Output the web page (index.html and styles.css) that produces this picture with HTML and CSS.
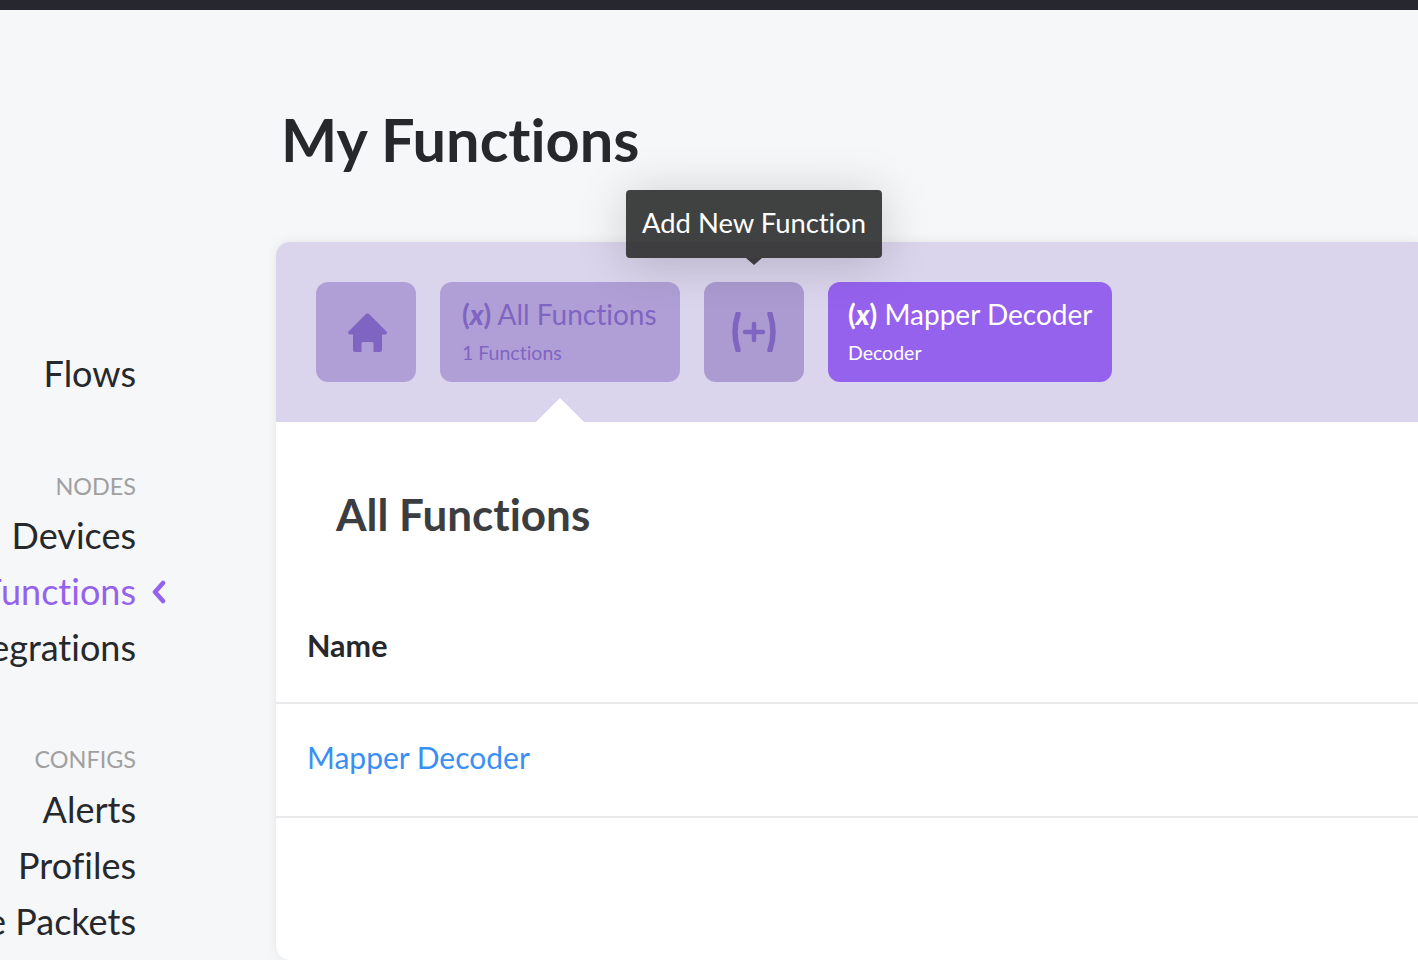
FILE: index.html
```html
<!DOCTYPE html>
<html lang="en">

<head>
  <meta charset="UTF-8">
  <title>My Functions</title>

  <link rel="stylesheet" href="styles.css">
</head>

<body>
  <div class="topbar"></div>

  <div class="layout">
    <nav class="sidebar">
      <a class="nav-item nav-flows">Flows</a>

      <div class="nav-label nav-label-nodes">NODES</div>
      <a class="nav-item">Devices</a>
      <a class="nav-item nav-active">Functions
        <svg class="nav-chevron" width="14" height="24" viewBox="0 0 14 24">
          <path d="M11 3 L3 12 L11 21" fill="none" stroke="#9562ee" stroke-width="4.500" stroke-linecap="round" stroke-linejoin="round" />
        </svg>
      </a>
      <a class="nav-item">Integrations</a>

      <div class="nav-label nav-label-configs">CONFIGS</div>
      <a class="nav-item">Alerts</a>
      <a class="nav-item">Profiles</a>
      <a class="nav-item">Free Packets</a>
    </nav>

    <main class="content">
      <h1 class="page-title">My Functions</h1>

      <section class="panel">
        <div class="panel-head">
          <div class="tab tab-icon">
            <svg class="home-icon" width="40" height="40" viewBox="0 0 40 40">
              <path d="M18 1 Q19.500 0 21 1 L38.500 18.500 Q39.800 21.500 37 21.500 L34 21.500 L34 37 Q34 39 32 39 L25.500 39 L25.500 30.500 Q25.500 29 24 29 L15 29 Q13.500 29 13.500 30.500 L13.500 39 L7 39 Q5 39 5 37 L5 21.500 L2 21.500 Q-0.800 21.500 0.500 18.500 Z" fill="#7f65c1" />
            </svg>
          </div>

          <div class="tab tab-text tab-all">
            <div class="tab-title"><span class="tab-x">(<i>x</i>)</span> All Functions</div>
            <div class="tab-sub">1 Functions</div>
          </div>

          <div class="tab tab-icon tab-add">
            <div class="tooltip">Add New Function</div>
            <svg width="46" height="40" viewBox="0 0 46 40">
              <path d="M7 2 Q1 20 7 38 M39 2 Q45 20 39 38" fill="none" stroke="#7f65c1" stroke-width="5.500" stroke-linecap="round" />
              <path d="M14 20 H32 M23 12 V28" fill="none" stroke="#7f65c1" stroke-width="4.500" stroke-linecap="round" />
            </svg>
          </div>

          <div class="tab tab-text tab-current">
            <div class="tab-title"><span class="tab-x">(<i>x</i>)</span> Mapper Decoder</div>
            <div class="tab-sub">Decoder</div>
          </div>

          <div class="tab-arrow"></div>
        </div>

        <h2 class="section-title">All Functions</h2>

        <div class="table-head">Name</div>
        <div class="table-row"><a class="fn-link">Mapper Decoder</a></div>
      </section>
    </main>
  </div>
</body>

</html>
```
FILE: styles.css
```css
html,
body {
  height: 100%;
}

body {
  font-family: 'Lato', 'Open Sans', sans-serif;
  font-variant-ligatures: none;
  background: #f6f7f9;
  color: #26282c;
  margin: 0;
  padding: 0;
  overflow: hidden;
}

.topbar {
  height: 10px;
  background: #26272f;
}

.layout {
  display: flex;
  height: 950px;
}

.sidebar {
  flex: 0 0 276px;
  width: 276px;
  box-sizing: border-box;
  padding: 335px 140px 0 0;
  display: flex;
  flex-direction: column;
  align-items: flex-end;
}

.nav-item {
  position: relative;
  height: 56px;
  line-height: 56px;
  font-size: 36px;
  white-space: nowrap;
}

.nav-active {
  color: #9562ee;
}

.nav-chevron {
  position: absolute;
  left: calc(100% + 16px);
  top: 17px;
}

.nav-label {
  font-size: 23.400px;
  color: #a0a0a0;
  line-height: 28px;
}

.nav-label-nodes {
  margin-top: 71px;
  margin-bottom: 7px;
}

.nav-label-configs {
  margin-top: 70px;
  margin-bottom: 8px;
}

.content {
  flex: 1;
  min-width: 0;
}

.page-title {
  font-size: 59.500px;
  font-weight: 700;
  line-height: 70px;
  margin: 94px 0 0 5px;
}

.panel {
  margin-top: 68px;
  height: 718px;
  background: white;
  border-radius: 14px 0 0 14px;
  box-shadow: 0 0 12px rgba(0, 0, 0, 0.08);
}

.panel-head {
  position: relative;
  height: 180px;
  box-sizing: border-box;
  padding: 40px;
  display: flex;
  gap: 24px;
  background: #dad4ec;
  border-radius: 14px 0 0 0;
}

.tab {
  height: 100px;
  box-sizing: border-box;
  border-radius: 12px;
  background: #af9fd6;
  color: #7f65c1;
}

.tab-icon {
  width: 100px;
  display: flex;
  align-items: center;
  justify-content: center;
}

.home-icon {
  margin: 2px 0 0 4px;
}

.tab-add {
  position: relative;
  background: #ab9bd1;
}

.tab-text {
  padding: 13px 20px 0 22px;
}

.tab-all {
  width: 240px;
}

.tab-current {
  width: 284px;
  padding-left: 20px;
  background: #9562ee;
  color: white;
}

.tab-title {
  font-size: 28px;
  line-height: 38px;
  white-space: nowrap;
}

.tab-x {
  font-weight: 700;
}

.tab-x i {
  font-weight: 900;
}

.tab-sub {
  font-size: 19.500px;
  line-height: 26px;
  margin-top: 7px;
  white-space: nowrap;
}

.tab-arrow {
  position: absolute;
  left: 260px;
  bottom: 0;
  width: 0;
  height: 0;
  border-left: 24px solid transparent;
  border-right: 24px solid transparent;
  border-bottom: 24px solid white;
}

.tooltip {
  position: absolute;
  left: 50%;
  top: -92px;
  transform: translateX(-50%);
  height: 68px;
  line-height: 66px;
  padding: 0 16px;
  background: rgba(44, 46, 45, 0.9);
  color: white;
  font-size: 27.400px;
  border-radius: 4px;
  white-space: nowrap;
  box-shadow: 0 4px 50px rgba(0, 0, 0, 0.18);
}

.tooltip::after {
  content: "";
  position: absolute;
  left: 50%;
  top: 100%;
  margin-left: -8px;
  border-left: 8px solid transparent;
  border-right: 8px solid transparent;
  border-top: 7px solid #3b393d;
}

.section-title {
  font-size: 44px;
  font-weight: 700;
  line-height: 52px;
  color: #3c3d40;
  margin: 66px 0 0 60px;
}

.table-head {
  margin-top: 80px;
  padding: 0 31px;
  height: 82px;
  line-height: 50px;
  font-size: 30.500px;
  font-weight: 700;
  border-bottom: 2px solid #e9e9ec;
}

.table-row {
  height: 112px;
  line-height: 106px;
  padding: 0 31px;
  font-size: 30px;
  border-bottom: 2px solid #e9e9ec;
}

.fn-link {
  color: #3a8ff5;
}
```
